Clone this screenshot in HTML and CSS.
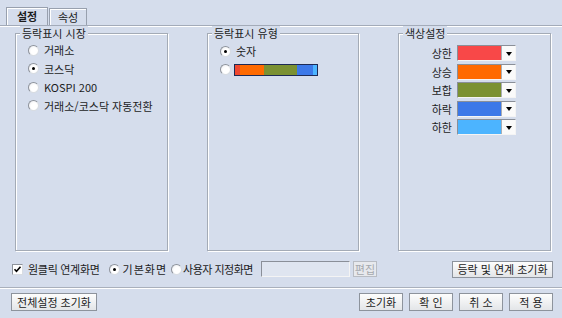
FILE: index.html
```html
<!DOCTYPE html>
<html lang="ko">
<head>
  <meta charset="UTF-8">
  <title>설정</title>
  <link rel="stylesheet" href="styles.css">
</head>
<body>
  <div class="tabs">
    <div class="tab active">설정</div>
    <div class="tab">속성</div>
  </div>

  <div class="panel">
    <div class="groups">
      <div class="group">
        <div class="group-title">등락표시 시장</div>
        <div class="radio-list">
          <label class="radio"><span class="dot"></span>거래소</label>
          <label class="radio"><span class="dot checked"></span>코스닥</label>
          <label class="radio"><span class="dot"></span>KOSPI 200</label>
          <label class="radio"><span class="dot"></span>거래소/코스닥 자동전환</label>
        </div>
      </div>

      <div class="group">
        <div class="group-title">등락표시 유형</div>
        <div class="radio-list type-list">
          <label class="radio"><span class="dot checked"></span>숫자</label>
          <label class="radio"><span class="dot"></span><span class="color-bar"><i class="seg red"></i><i class="seg orange"></i><i class="seg olive"></i><i class="seg blue"></i><i class="seg sky"></i></span></label>
        </div>
      </div>

      <div class="group">
        <div class="group-title">색상설정</div>
        <div class="color-list">
          <div class="color-row"><span class="color-label">상한</span><span class="combo"><span class="swatch" style="background:#f84848"></span><span class="combo-btn"></span></span></div>
          <div class="color-row"><span class="color-label">상승</span><span class="combo"><span class="swatch" style="background:#ff6a00"></span><span class="combo-btn"></span></span></div>
          <div class="color-row"><span class="color-label">보합</span><span class="combo"><span class="swatch" style="background:#7b9132"></span><span class="combo-btn"></span></span></div>
          <div class="color-row"><span class="color-label">하락</span><span class="combo"><span class="swatch" style="background:#3c78e8"></span><span class="combo-btn"></span></span></div>
          <div class="color-row"><span class="color-label">하한</span><span class="combo"><span class="swatch" style="background:#4cb4ff"></span><span class="combo-btn"></span></span></div>
        </div>
      </div>
    </div>

    <div class="options">
      <label class="check">
        <span class="box"><svg width="9" height="9" viewBox="0 0 9 9"><path d="M1.5 4.2 L3.5 6.3 L7.5 1.8" fill="none" stroke="#000" stroke-width="1.6"/></svg></span>원클릭 연계화면
      </label>
      <label class="radio opt-radio"><span class="dot checked"></span>기본화면</label>
      <label class="radio opt-radio custom"><span class="dot"></span>사용자 지정화면</label>
      <input class="path-input" type="text" disabled>
      <button class="btn btn-disabled" disabled>편집</button>
      <span class="spacer"></span>
      <button class="btn btn-reset">등락 및 연계 초기화</button>
    </div>
  </div>

  <div class="footer">
    <button class="btn btn-all">전체설정 초기화</button>
    <span class="spacer"></span>
    <button class="btn btn-small">초기화</button>
    <button class="btn btn-small">확 인</button>
    <button class="btn btn-small">취 소</button>
    <button class="btn btn-small">적 용</button>
  </div>
</body>
</html>
```

FILE: styles.css
```css
body {
  margin: 0;
  width: 562px;
  height: 318px;
  overflow: hidden;
  background-color: #d5ddec;
  font-family: "Noto Sans CJK KR", "DejaVu Sans", sans-serif;
  font-size: 11px;
  color: #1c1c1c;
}

/* tabs */
.tabs {
  display: flex;
  align-items: flex-end;
  height: 25px;
  padding-left: 6px;
}
.tab {
  box-sizing: border-box;
  width: 38px;
  height: 17px;
  line-height: 16px;
  border: 1px solid #98a0ae;
  border-bottom: none;
  box-shadow: inset 1px 1px 0 #fff;
  text-align: center;
  white-space: nowrap;
}
.tab.active {
  width: 42px;
  height: 18px;
  font-weight: bold;
}
.tab + .tab {
  margin-left: 1px;
}

.panel {
  border-top: 1px solid #a3abb9;
  box-shadow: inset 0 1px 0 #fff;
}

/* group boxes */
.groups {
  display: flex;
  justify-content: space-between;
  padding: 0 11px 0 15px;
}
.group {
  box-sizing: border-box;
  width: 153px;
  height: 218px;
  margin-top: 7px;
  border: 1px solid #a4abb6;
  box-shadow: 1px 1px 0 #fff, inset 1px 1px 0 #fff;
}
.group:nth-child(2) {
  width: 152px;
}
.group-title {
  width: fit-content;
  margin: -8px 0 0 4px;
  padding: 0 2px;
  line-height: 15px;
  background-color: #d5ddec;
}

.radio-list {
  padding-left: 12px;
}
.type-list {
  padding-top: 1px;
}
.radio {
  display: flex;
  align-items: center;
  height: 18.5px;
}
.dot {
  box-sizing: border-box;
  width: 11px;
  height: 11px;
  margin-right: 5px;
  border-radius: 50%;
  border: 1px solid #8e939b;
  border-right-color: #d8dce2;
  border-bottom-color: #d8dce2;
  background: radial-gradient(circle at 60% 60%, #fff 40%, #e9ebef 100%);
  display: flex;
  align-items: center;
  justify-content: center;
}
.dot.checked::after {
  content: "";
  width: 3px;
  height: 3px;
  border-radius: 50%;
  background-color: #000;
}

.color-bar {
  display: flex;
  width: 82px;
  height: 10px;
  margin-left: -2px;
  border: 1px solid #1d2a55;
}
.seg { display: block; height: 100%; }
.seg.red { width: 5px; background-color: #f04830; }
.seg.orange { width: 24px; background-color: #ff6a00; }
.seg.olive { width: 33px; background-color: #7b9132; }
.seg.blue { width: 16px; background-color: #3c78e8; }
.seg.sky { width: 4px; background-color: #4cb4ff; }

/* colour settings */
.color-list {
  padding-top: 3px;
}
.color-row {
  display: flex;
  align-items: center;
  height: 18.5px;
}
.color-label {
  width: 53px;
  text-align: right;
  margin-right: 5px;
}
.combo {
  display: flex;
  box-sizing: border-box;
  width: 59px;
  height: 16px;
  border: 1px solid #8a8f98;
  border-right-color: #f4f4f4;
  border-bottom-color: #f4f4f4;
  background-color: #fff;
}
.swatch {
  flex: 1;
  border-right: 1px solid #a9adb4;
}
.combo-btn {
  width: 13px;
  display: flex;
  align-items: center;
  justify-content: center;
  background-color: #fafafa;
}
.combo-btn::after {
  content: "";
  border-left: 3px solid transparent;
  border-right: 3px solid transparent;
  border-top: 4px solid #000;
  margin-top: 1px;
}

/* option row */
.options {
  display: flex;
  align-items: center;
  height: 36px;
  padding: 0 9px 0 12px;
}
.check {
  display: flex;
  align-items: center;
  margin-right: 9px;
  letter-spacing: -0.3px;
}
.box {
  box-sizing: border-box;
  width: 11px;
  height: 11px;
  margin-right: 5px;
  border: 1px solid #8e939b;
  border-right-color: #d8dce2;
  border-bottom-color: #d8dce2;
  background-color: #fff;
  display: flex;
  align-items: center;
  justify-content: center;
}
.opt-radio {
  margin-right: 4px;
  letter-spacing: 1px;
}
.opt-radio .dot {
  margin-right: 3px;
}
.opt-radio.custom {
  letter-spacing: -0.5px;
  margin-right: 0;
}
.opt-radio.custom .dot {
  margin-right: 1px;
}
.path-input {
  box-sizing: border-box;
  width: 89px;
  height: 16px;
  margin: 0 3px 0 8px;
  border: 1px solid #8a8f98;
  border-right-color: #f4f4f4;
  border-bottom-color: #f4f4f4;
  background-color: #dfe5f0;
}
.spacer {
  flex: 1;
}

/* buttons */
.btn {
  box-sizing: border-box;
  height: 18px;
  padding: 0;
  border: 1px solid #8d939c;
  background: linear-gradient(#fdfdfd, #e3e5e8);
  font-family: inherit;
  font-size: 11px;
  color: #1c1c1c;
  line-height: 14px;
}
.btn-disabled {
  width: 24px;
  height: 16px;
  border-color: #b8bcc3;
  color: #a4a8ae;
  background: #e7e9ed;
}
.btn-reset {
  width: 101px;
  height: 17px;
}

.footer {
  display: flex;
  align-items: flex-start;
  gap: 6px;
  border-top: 1px solid #a9b0bc;
  box-shadow: inset 0 1px 0 #fff;
  padding: 5px 9px 0 11px;
}
.btn-all {
  width: 86px;
}
.btn-small {
  width: 44px;
}
```
